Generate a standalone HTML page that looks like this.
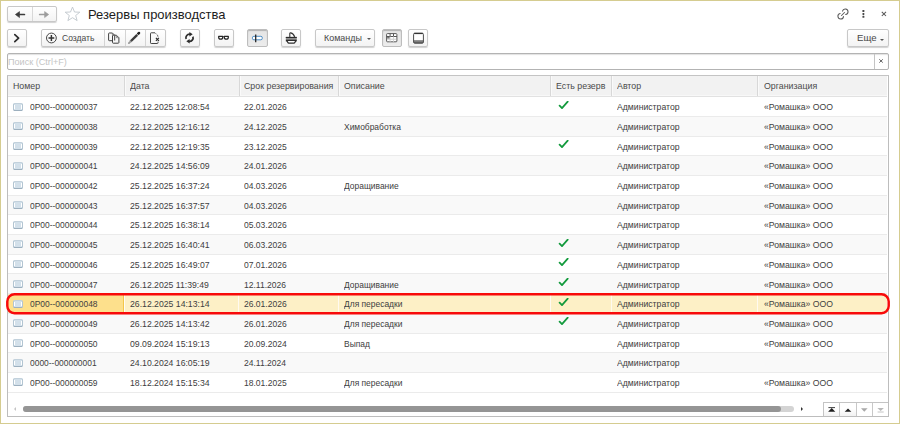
<!DOCTYPE html><html><head><meta charset="utf-8"><style>*,*:before,*:after{margin:0;padding:0;box-sizing:border-box}
html,body{width:900px;height:424px;overflow:hidden;background:#fff}
body{font-family:"Liberation Sans",sans-serif;color:#333;position:relative}
#frame{position:absolute;left:0;top:0;width:900px;height:424px;background:#fff}
#frame:after{content:"";position:absolute;left:0;top:0;width:900px;height:424px;border:1px solid #d5cc90;pointer-events:none}
#frame>*{position:absolute}
.btn{position:absolute;height:18px;top:29px;border:1px solid #c8c8c8;border-radius:2px;background:linear-gradient(#fff,#f3f3f3);box-shadow:0 1px 1px rgba(0,0,0,.18)}
.btn.pr{background:linear-gradient(#e4e4e4,#ececec);box-shadow:inset 0 1px 1px rgba(0,0,0,.22),0 1px 0 rgba(255,255,255,.8);border-color:#bdbdbd}
.btn svg{position:absolute}
.lbl{position:absolute;font-size:9.6px;color:#484848;white-space:nowrap;line-height:1;transform:scaleX(.93);transform-origin:0 0}
#title{left:88px;top:7.6px;font-size:13.6px;color:#1c1c1c;white-space:nowrap;line-height:1;transform:scaleX(.955);transform-origin:0 0}
#search{left:7px;top:53px;width:881.5px;height:17px;border:1px solid #b3b3b3;border-radius:2px;box-shadow:inset 0 1px 1px rgba(0,0,0,.12)}
#search span{position:absolute;left:.3px;top:4px;font-size:9.2px;color:#c4c4c4;white-space:nowrap;line-height:1;transform:scaleX(.99);transform-origin:0 0}
#search i{position:absolute;left:865.5px;top:0;width:1px;height:15px;background:#c4c4c4}
#tbl{left:7px;top:75px;width:882px;height:342px;overflow:hidden}
#tbl:after{content:"";position:absolute;left:0;top:0;width:882px;height:342px;border:1px solid #bdbdbd;border-top-color:#c4c4c4}
#tbl>*{position:absolute}
.hdr{left:0;top:0;width:880px;height:22px;background:linear-gradient(#f2f2f2 0,#f2f2f2 20px,#f8f8f8 20px,#f8f8f8 21px,#e2e2e2 21px)}
.ht{position:absolute;top:6.6px;font-size:9.2px;color:#4a4a4a;white-space:nowrap;line-height:1;transform:scaleX(.96);transform-origin:0 0}
.hs{position:absolute;top:1px;width:1px;height:20px;background:#d8d8d8;box-shadow:1px 0 0 #fafafa}
.row{left:0;width:880px;height:19.7px}
.sep{left:0;width:880px;height:1px;background:#ebebeb}
.row .t{position:absolute;top:5.3px;font-size:9.4px;color:#404040;white-space:nowrap;line-height:1;transform-origin:0 0}
.ric{position:absolute;left:5.8px;top:5.6px;width:10.4px;height:8px;border:1px solid #b3c5d2;border-top-color:#c2d1dc;border-bottom-color:#9db0bf;border-radius:1.5px;background:linear-gradient(#d3e0ea 0,#d3e0ea 1px,transparent 1px,transparent 5px,#d3e0ea 5px),linear-gradient(90deg,#fff 0,#fff 1px,#d3e0ea 1px,#d3e0ea 7.4px,#fff 7.4px)}
.chk{position:absolute;left:551px;top:3.8px}
.row.alt{background:#f9f9f9}
.row.sel{background:#fdf0c6}
.row .vs{position:absolute;top:0;width:1px;height:19px;background:#fffaf0}
.row.sel .cur{position:absolute;left:0;top:0;width:117px;height:19.7px;border-radius:6px 0 0 6px;background:#fde08c;border:1px solid #f3c64a;box-shadow:1px 0 0 #fffdf5}
#hscroll{left:0;top:326px;width:815px;height:14px}
#hscroll .la{position:absolute;left:7px;top:6px;width:0;height:0;border:2px solid transparent;border-right:2.5px solid #c4c4c4;border-left:0}
#hscroll .track{position:absolute;left:16px;top:5px;width:771px;height:5.5px;border-radius:3px;background:#d4d4d4}
#hscroll .thumb{position:absolute;left:16px;top:5px;width:758px;height:5.5px;border-radius:3px;background:#959595}
#hscroll .ra{position:absolute;left:794px;top:6px;width:0;height:0;border:2.5px solid transparent;border-left:2.5px solid #333;border-right:0}
#nav{left:815.8px;top:327px;width:66px;height:15px;border-top:1px solid #c4c4c4;border-left:1px solid #c4c4c4}
#nav b{position:absolute;top:0;width:16.4px;height:14px;border-right:1px solid #c8c8c8;background:linear-gradient(#fff 40%,#f0f0f0)}
#nav .n1{left:0}#nav .n2{left:16.4px}#nav .n3{left:32.8px;background:#fff}#nav .n4{left:49.2px;border-right:0;background:#fff}
#navic{left:809px;top:326px}
#redbox{left:0;top:0}

</style></head><body>
<div id="frame">
<div class="btn" style="left:7px;top:6px;width:50px;height:16px"><i style="position:absolute;left:24px;top:0;width:1px;height:14px;background:#d8d8d8"></i></div>
<div id="title">Резервы производства</div>
<div class="btn" style="left:7px;width:20px"></div>
<div class="btn" style="left:41px;width:124.5px">
<span class="lbl" style="left:20px;top:3.2px;transform:scaleX(.89)">Создать</span>
<i style="position:absolute;left:62px;top:0;width:1px;height:16px;background:#d4d4d4"></i>
<i style="position:absolute;left:83px;top:0;width:1px;height:16px;background:#d4d4d4"></i>
<i style="position:absolute;left:103px;top:0;width:1px;height:16px;background:#d4d4d4"></i>
</div>
<div class="btn" style="left:179.5px;width:20px"></div>
<div class="btn" style="left:213.5px;width:20px"></div>
<div class="btn pr" style="left:247.4px;width:20.2px"></div>
<div class="btn" style="left:281.2px;width:20px"></div>
<div class="btn" style="left:315.3px;width:60px"><span class="lbl" style="left:8px;top:3.2px">Команды</span><i style="position:absolute;left:50.5px;top:8px;width:0;height:0;border-left:2px solid transparent;border-right:2px solid transparent;border-top:2px solid #555"></i></div>
<div class="btn pr" style="left:381.8px;width:20px"></div>
<div class="btn" style="left:408.3px;width:20px"></div>
<div class="btn" style="left:847px;width:41.5px"><span class="lbl" style="left:9px;top:3.2px;transform:none">Еще</span><i style="position:absolute;left:31.8px;top:8.5px;width:0;height:0;border-left:2px solid transparent;border-right:2px solid transparent;border-top:2px solid #555"></i></div>
<div id="search"><span>Поиск (Ctrl+F)</span><i></i></div>
<svg id="ov" width="900" height="75" viewBox="0 0 900 75" style="left:0;top:0">
<!-- back / forward -->
<path d="M19.5 11.6L15.4 14.5L19.5 17.6Z" fill="#3c3c3c" stroke="#3c3c3c" stroke-width=".6" stroke-linejoin="round"/><path d="M18.5 14.5H24.4" stroke="#3c3c3c" stroke-width="1.7" stroke-linecap="round"/>
<path d="M44.6 11.6L48.7 14.5L44.6 17.6Z" fill="#9c9c9c" stroke="#9c9c9c" stroke-width=".6" stroke-linejoin="round"/><path d="M45.6 14.5H39.7" stroke="#9c9c9c" stroke-width="1.7" stroke-linecap="round"/>
<!-- star -->
<path d="M72.5 7.1L74.5 12L79.8 12.2L75.7 15.5L77.1 20.6L72.5 17.7L67.9 20.6L69.3 15.5L65.2 12.2L70.5 12Z" fill="none" stroke="#c0c6cc" stroke-width=".9" stroke-linejoin="round"/>
<!-- link -->
<g transform="translate(834 5)" fill="none" stroke="#5a5a5a" stroke-width="1.05" stroke-linecap="round"><path d="M8.5 6.1A2.8 2.8 0 1 1 11.6 9.5"/><path d="M6.1 8.5A2.8 2.8 0 1 0 9.5 11.6"/><path d="M7.5 10.5L10.5 7.5"/></g>
<!-- dots -->
<g fill="#484848"><rect x="862.4" y="10" width="2" height="2" rx=".6"/><rect x="862.4" y="12.9" width="2" height="2" rx=".6"/><rect x="862.4" y="15.8" width="2" height="2" rx=".6"/></g>
<!-- close -->
<path d="M881.8 11.8L886 16M886 11.8L881.8 16" stroke="#555" stroke-width="1.05"/>
<!-- chevron -->
<path d="M14.8 34.6L18.6 38.1L14.8 41.6" fill="none" stroke="#2e2e2e" stroke-width="1.7" stroke-linecap="round" stroke-linejoin="round"/>
<!-- plus circle -->
<circle cx="51.4" cy="38" r="4.9" fill="none" stroke="#3e3e3e" stroke-width=".95"/><path d="M51.4 35.1V40.9M48.5 38H54.3" stroke="#333" stroke-width="1.45"/>
<!-- copy -->
<g fill="none" stroke="#404040" stroke-width="1" stroke-linejoin="round"><path d="M112.4 40.7H109.3Q108.6 40.7 108.6 40V33.7Q108.6 33 109.3 33H112.4L114.7 35.3V40.5"/><path d="M112.5 42.5V35.9Q112.5 35.2 113.2 35.2H116.4L118.9 37.7V42.5Q118.9 43.2 118.2 43.2H113.2Q112.5 43.2 112.5 42.5Z"/><path d="M112.4 33V35.3H114.7M116.4 35.2V37.7H118.9" stroke="#777" stroke-width=".8"/></g>
<!-- pencil -->
<path d="M130.5 41.5L137.2 34.8" stroke="#3a3a3a" stroke-width="2.4"/><path d="M128.9 43.1L130.7 41.3" stroke="#9a9a9a" stroke-width="1.9" stroke-linecap="round"/><path d="M138.1 33.9L139 33" stroke="#222" stroke-width="2.5" stroke-linecap="round"/><path d="M136.8 33.7L138.3 35.2" stroke="#fff" stroke-width=".6"/>
<!-- delete doc -->
<g fill="none" stroke="#444" stroke-width="1" stroke-linejoin="round"><path d="M155 32.8H151.2Q150.5 32.8 150.5 33.5V42.8Q150.5 43.5 151.2 43.5H157.3Q158 43.5 158 42.8V41.7"/><path d="M155 32.8L155.9 33.7M156.7 34.5L157.9 35.7V36.7" stroke="#555"/></g><path d="M155.9 37.9L158.9 40.9M158.9 37.9L155.9 40.9" stroke="#2a2a2a" stroke-width="1.15"/>
<!-- refresh -->
<g fill="none" stroke="#2e2e2e" stroke-width="1.75"><path d="M190.1 34.25A3.6 3.6 0 0 0 186.1 39"/><path d="M188.9 41.35A3.6 3.6 0 0 0 192.9 36.6"/></g><path d="M189.4 32.1L192.7 34.3L189.4 36.5Z" fill="#2e2e2e"/><path d="M189.6 39.1L186.3 41.3L189.6 43.5Z" fill="#2e2e2e"/>
<!-- glasses -->
<path d="M222.6 36.5H224.4" stroke="#555" stroke-width=".8"/><g fill="#fff" stroke="#262626" stroke-width="1.25" stroke-linejoin="round"><path d="M218.7 36.3H222.7V37.5Q222.7 39.2 220.7 39.2Q218.7 39.2 218.7 37.5Z"/><path d="M224.3 36.3H228.3V37.5Q228.3 39.2 226.3 39.2Q224.3 39.2 224.3 37.5Z"/></g>
<!-- pin -->
<rect x="252.4" y="36.3" width="9.9" height="3.5" rx="1.5" fill="#fff" stroke="#4a8dc6" stroke-width="1"/><path d="M255.7 34.6V42.3" stroke="#262626" stroke-width="1.3"/>
<!-- print -->
<path d="M289.8 37.2V33.6Q289.8 32.7 290.8 32.9Q293.6 33.5 294.7 37" fill="#fff" stroke="#333" stroke-width="1.1"/><rect x="285.8" y="36.9" width="11" height="4.4" fill="#9c9c9c"/><path d="M285.8 37.5H296.8" stroke="#2c2c2c" stroke-width="1.2"/><path d="M285.9 40.5H296.7" stroke="#2c2c2c" stroke-width="1.7"/><path d="M287 41L288 42.6Q288.2 43 288.7 43H294Q294.5 43 294.7 42.6L295.7 41" fill="#fff" stroke="#2c2c2c" stroke-width="1.25" stroke-linejoin="round"/>
<!-- table view -->
<rect x="386.6" y="33.6" width="10.3" height="8.2" rx=".8" fill="#fff" stroke="#5a5a5a" stroke-width="1"/><path d="M386.6 36.5H396.9" stroke="#555" stroke-width="1"/><path d="M390.1 33.6V36.5M393.5 33.6V36.5" stroke="#555" stroke-width="1"/><path d="M387.1 39.2H396.4" stroke="#c4c4c4" stroke-width=".9"/><path d="M390.1 36.5V41.8M393.5 36.5V41.8" stroke="#d0d0d0" stroke-width=".9"/><path d="M387.1 37.8H389.6" stroke="#666" stroke-width="1.4"/>
<!-- panel -->
<defs><linearGradient id="pg" x1="0" y1="0" x2="0" y2="1"><stop offset=".68" stop-color="#fff"/><stop offset=".7" stop-color="#9a9a9a"/><stop offset="1" stop-color="#5a5a5a"/></linearGradient></defs>
<rect x="413.6" y="33.2" width="9.8" height="10" rx="1.2" fill="url(#pg)" stroke="#4a4a4a" stroke-width="1"/><path d="M414.2 33.5H422.8" stroke="#333" stroke-width="1.2"/>
<!-- search close -->
<path d="M879.3 59.3L882.8 62.6M882.8 59.3L879.3 62.6" stroke="#666" stroke-width="1"/>
</svg>

<div id="tbl">
<div class="hdr">
<span class="ht" style="left:5.7px">Номер</span>
<span class="ht" style="left:123.0px">Дата</span>
<span class="ht" style="left:236.5px">Срок резервирования</span>
<span class="ht" style="left:337.0px">Описание</span>
<span class="ht" style="left:548.8px">Есть резерв</span>
<span class="ht" style="left:610.0px">Автор</span>
<span class="ht" style="left:757.0px">Организация</span>
<i class="hs" style="left:117.0px"></i>
<i class="hs" style="left:231.5px"></i>
<i class="hs" style="left:331.0px"></i>
<i class="hs" style="left:543.0px"></i>
<i class="hs" style="left:604.0px"></i>
<i class="hs" style="left:750.0px"></i>
</div>
<div class="row" style="top:22.00px">
<i class="ric"></i>
<span class="t" style="left:22.6px;transform:scaleX(0.9)">0P00--000000037</span>
<span class="t" style="left:123.0px;transform:scaleX(0.925)">22.12.2025 12:08:54</span>
<span class="t" style="left:236.5px;transform:scaleX(0.91)">22.01.2026</span>
<svg class="chk" width="11" height="10" viewBox="0 0 11 10"><path d="M1.6 4.7 L4 7.1 L9.7 .7" fill="none" stroke="#129a3c" stroke-width="1.75" stroke-linecap="round" stroke-linejoin="round"/></svg>
<span class="t" style="left:610.0px;transform:scaleX(0.925)">Администратор</span>
<span class="t" style="left:757.0px;transform:scaleX(0.925)">«Ромашка» ООО</span>
</div>
<div class="row alt" style="top:41.70px">
<i class="ric"></i>
<span class="t" style="left:22.6px;transform:scaleX(0.9)">0P00--000000038</span>
<span class="t" style="left:123.0px;transform:scaleX(0.925)">22.12.2025 12:16:12</span>
<span class="t" style="left:236.5px;transform:scaleX(0.91)">24.12.2025</span>
<span class="t" style="left:337.0px;transform:scaleX(0.9)">Химобработка</span>
<span class="t" style="left:610.0px;transform:scaleX(0.925)">Администратор</span>
<span class="t" style="left:757.0px;transform:scaleX(0.925)">«Ромашка» ООО</span>
</div>
<div class="row" style="top:61.40px">
<i class="ric"></i>
<span class="t" style="left:22.6px;transform:scaleX(0.9)">0P00--000000039</span>
<span class="t" style="left:123.0px;transform:scaleX(0.925)">22.12.2025 12:19:35</span>
<span class="t" style="left:236.5px;transform:scaleX(0.91)">23.12.2025</span>
<svg class="chk" width="11" height="10" viewBox="0 0 11 10"><path d="M1.6 4.7 L4 7.1 L9.7 .7" fill="none" stroke="#129a3c" stroke-width="1.75" stroke-linecap="round" stroke-linejoin="round"/></svg>
<span class="t" style="left:610.0px;transform:scaleX(0.925)">Администратор</span>
<span class="t" style="left:757.0px;transform:scaleX(0.925)">«Ромашка» ООО</span>
</div>
<div class="row alt" style="top:81.10px">
<i class="ric"></i>
<span class="t" style="left:22.6px;transform:scaleX(0.9)">0P00--000000041</span>
<span class="t" style="left:123.0px;transform:scaleX(0.925)">24.12.2025 14:56:09</span>
<span class="t" style="left:236.5px;transform:scaleX(0.91)">24.01.2026</span>
<span class="t" style="left:610.0px;transform:scaleX(0.925)">Администратор</span>
<span class="t" style="left:757.0px;transform:scaleX(0.925)">«Ромашка» ООО</span>
</div>
<div class="row" style="top:100.80px">
<i class="ric"></i>
<span class="t" style="left:22.6px;transform:scaleX(0.9)">0P00--000000042</span>
<span class="t" style="left:123.0px;transform:scaleX(0.925)">25.12.2025 16:37:24</span>
<span class="t" style="left:236.5px;transform:scaleX(0.91)">04.03.2026</span>
<span class="t" style="left:337.0px;transform:scaleX(0.9)">Доращивание</span>
<span class="t" style="left:610.0px;transform:scaleX(0.925)">Администратор</span>
<span class="t" style="left:757.0px;transform:scaleX(0.925)">«Ромашка» ООО</span>
</div>
<div class="row alt" style="top:120.50px">
<i class="ric"></i>
<span class="t" style="left:22.6px;transform:scaleX(0.9)">0P00--000000043</span>
<span class="t" style="left:123.0px;transform:scaleX(0.925)">25.12.2025 16:37:57</span>
<span class="t" style="left:236.5px;transform:scaleX(0.91)">04.03.2026</span>
<span class="t" style="left:610.0px;transform:scaleX(0.925)">Администратор</span>
<span class="t" style="left:757.0px;transform:scaleX(0.925)">«Ромашка» ООО</span>
</div>
<div class="row" style="top:140.20px">
<i class="ric"></i>
<span class="t" style="left:22.6px;transform:scaleX(0.9)">0P00--000000044</span>
<span class="t" style="left:123.0px;transform:scaleX(0.925)">25.12.2025 16:38:14</span>
<span class="t" style="left:236.5px;transform:scaleX(0.91)">05.03.2026</span>
<span class="t" style="left:610.0px;transform:scaleX(0.925)">Администратор</span>
<span class="t" style="left:757.0px;transform:scaleX(0.925)">«Ромашка» ООО</span>
</div>
<div class="row alt" style="top:159.90px">
<i class="ric"></i>
<span class="t" style="left:22.6px;transform:scaleX(0.9)">0P00--000000045</span>
<span class="t" style="left:123.0px;transform:scaleX(0.925)">25.12.2025 16:40:41</span>
<span class="t" style="left:236.5px;transform:scaleX(0.91)">06.03.2026</span>
<svg class="chk" width="11" height="10" viewBox="0 0 11 10"><path d="M1.6 4.7 L4 7.1 L9.7 .7" fill="none" stroke="#129a3c" stroke-width="1.75" stroke-linecap="round" stroke-linejoin="round"/></svg>
<span class="t" style="left:610.0px;transform:scaleX(0.925)">Администратор</span>
<span class="t" style="left:757.0px;transform:scaleX(0.925)">«Ромашка» ООО</span>
</div>
<div class="row" style="top:179.60px">
<i class="ric"></i>
<span class="t" style="left:22.6px;transform:scaleX(0.9)">0P00--000000046</span>
<span class="t" style="left:123.0px;transform:scaleX(0.925)">25.12.2025 16:49:07</span>
<span class="t" style="left:236.5px;transform:scaleX(0.91)">07.01.2026</span>
<svg class="chk" width="11" height="10" viewBox="0 0 11 10"><path d="M1.6 4.7 L4 7.1 L9.7 .7" fill="none" stroke="#129a3c" stroke-width="1.75" stroke-linecap="round" stroke-linejoin="round"/></svg>
<span class="t" style="left:610.0px;transform:scaleX(0.925)">Администратор</span>
<span class="t" style="left:757.0px;transform:scaleX(0.925)">«Ромашка» ООО</span>
</div>
<div class="row alt" style="top:199.30px">
<i class="ric"></i>
<span class="t" style="left:22.6px;transform:scaleX(0.9)">0P00--000000047</span>
<span class="t" style="left:123.0px;transform:scaleX(0.925)">26.12.2025 11:39:49</span>
<span class="t" style="left:236.5px;transform:scaleX(0.91)">12.11.2026</span>
<span class="t" style="left:337.0px;transform:scaleX(0.9)">Доращивание</span>
<svg class="chk" width="11" height="10" viewBox="0 0 11 10"><path d="M1.6 4.7 L4 7.1 L9.7 .7" fill="none" stroke="#129a3c" stroke-width="1.75" stroke-linecap="round" stroke-linejoin="round"/></svg>
<span class="t" style="left:610.0px;transform:scaleX(0.925)">Администратор</span>
<span class="t" style="left:757.0px;transform:scaleX(0.925)">«Ромашка» ООО</span>
</div>
<div class="row sel" style="top:219.00px">
<i class="cur"></i>
<i class="vs" style="left:231.0px"></i>
<i class="vs" style="left:330.5px"></i>
<i class="vs" style="left:542.5px"></i>
<i class="vs" style="left:603.5px"></i>
<i class="vs" style="left:749.5px"></i>
<i class="ric"></i>
<span class="t" style="left:22.6px;transform:scaleX(0.9)">0P00--000000048</span>
<span class="t" style="left:123.0px;transform:scaleX(0.925)">26.12.2025 14:13:14</span>
<span class="t" style="left:236.5px;transform:scaleX(0.91)">26.01.2026</span>
<span class="t" style="left:337.0px;transform:scaleX(0.9)">Для пересадки</span>
<svg class="chk" width="11" height="10" viewBox="0 0 11 10"><path d="M1.6 4.7 L4 7.1 L9.7 .7" fill="none" stroke="#129a3c" stroke-width="1.75" stroke-linecap="round" stroke-linejoin="round"/></svg>
<span class="t" style="left:610.0px;transform:scaleX(0.925)">Администратор</span>
<span class="t" style="left:757.0px;transform:scaleX(0.925)">«Ромашка» ООО</span>
</div>
<div class="row alt" style="top:238.70px">
<i class="ric"></i>
<span class="t" style="left:22.6px;transform:scaleX(0.9)">0P00--000000049</span>
<span class="t" style="left:123.0px;transform:scaleX(0.925)">26.12.2025 14:13:42</span>
<span class="t" style="left:236.5px;transform:scaleX(0.91)">26.01.2026</span>
<span class="t" style="left:337.0px;transform:scaleX(0.9)">Для пересадки</span>
<svg class="chk" width="11" height="10" viewBox="0 0 11 10"><path d="M1.6 4.7 L4 7.1 L9.7 .7" fill="none" stroke="#129a3c" stroke-width="1.75" stroke-linecap="round" stroke-linejoin="round"/></svg>
<span class="t" style="left:610.0px;transform:scaleX(0.925)">Администратор</span>
<span class="t" style="left:757.0px;transform:scaleX(0.925)">«Ромашка» ООО</span>
</div>
<div class="row" style="top:258.40px">
<i class="ric"></i>
<span class="t" style="left:22.6px;transform:scaleX(0.9)">0P00--000000050</span>
<span class="t" style="left:123.0px;transform:scaleX(0.925)">09.09.2024 15:19:13</span>
<span class="t" style="left:236.5px;transform:scaleX(0.91)">20.09.2024</span>
<span class="t" style="left:337.0px;transform:scaleX(0.9)">Выпад</span>
<span class="t" style="left:610.0px;transform:scaleX(0.925)">Администратор</span>
<span class="t" style="left:757.0px;transform:scaleX(0.925)">«Ромашка» ООО</span>
</div>
<div class="row alt" style="top:278.10px">
<i class="ric"></i>
<span class="t" style="left:22.6px;transform:scaleX(0.9)">0000--000000001</span>
<span class="t" style="left:123.0px;transform:scaleX(0.925)">24.10.2024 16:05:19</span>
<span class="t" style="left:236.5px;transform:scaleX(0.91)">24.11.2024</span>
<span class="t" style="left:610.0px;transform:scaleX(0.925)">Администратор</span>
</div>
<div class="row" style="top:297.80px">
<i class="ric"></i>
<span class="t" style="left:22.6px;transform:scaleX(0.9)">0P00--000000059</span>
<span class="t" style="left:123.0px;transform:scaleX(0.925)">18.12.2024 15:15:34</span>
<span class="t" style="left:236.5px;transform:scaleX(0.91)">18.01.2025</span>
<span class="t" style="left:337.0px;transform:scaleX(0.9)">Для пересадки</span>
<span class="t" style="left:610.0px;transform:scaleX(0.925)">Администратор</span>
<span class="t" style="left:757.0px;transform:scaleX(0.925)">«Ромашка» ООО</span>
</div>
<i class="sep" style="top:41px"></i>
<i class="sep" style="top:61px"></i>
<i class="sep" style="top:80px"></i>
<i class="sep" style="top:100px"></i>
<i class="sep" style="top:120px"></i>
<i class="sep" style="top:139px"></i>
<i class="sep" style="top:159px"></i>
<i class="sep" style="top:179px"></i>
<i class="sep" style="top:198px"></i>
<i class="sep" style="top:218px"></i>
<i class="sep" style="top:238px"></i>
<i class="sep" style="top:258px"></i>
<i class="sep" style="top:277px"></i>
<i class="sep" style="top:297px"></i>
<i class="sep" style="top:317px"></i>
<div id="hscroll"><i class="la"></i><i class="track"></i><i class="thumb"></i><i class="ra"></i></div>
<div id="nav"><b class="n1"></b><b class="n2"></b><b class="n3"></b><b class="n4"></b></div>
<svg id="navic" width="70" height="16" viewBox="816 401 70 16"><path d="M828.4 407.6H835" stroke="#444" stroke-width="1"/><path d="M831.7 408.1L835.3 411.8H828.1Z" fill="#1e1e1e"/><path d="M848 408.5L851.3 411.8H844.7Z" fill="#1e1e1e"/><path d="M864.3 411.8L867.6 408.3H861Z" fill="#a9a9a9"/><path d="M880.65 411L883.9 408H877.4Z" fill="#b8b8b8"/><path d="M877.6 412H883.7" stroke="#c4c4c4" stroke-width="1"/></svg>
</div>
<svg id="redbox" width="900" height="424"><rect x="7.3" y="294.3" width="881.4" height="19" rx="7.2" fill="none" stroke="#f80a0a" stroke-width="2.45"/></svg>
</div></body></html>
